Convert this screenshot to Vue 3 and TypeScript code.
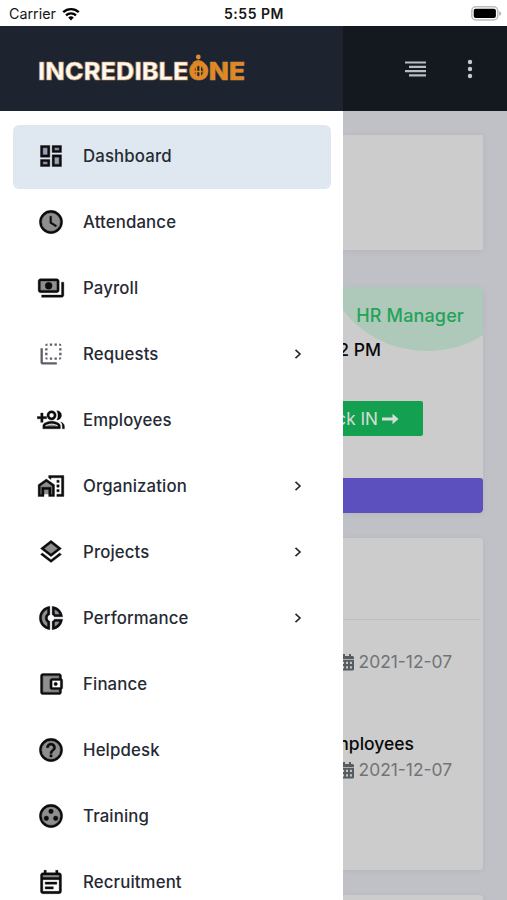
<script setup lang="ts">
interface MenuItem {
  label: string
  icon: string
  expandable?: boolean
  active?: boolean
}

const menu: MenuItem[] = [
  { label: 'Dashboard', icon: 'dashboard', active: true },
  { label: 'Attendance', icon: 'clock' },
  { label: 'Payroll', icon: 'payments' },
  { label: 'Requests', icon: 'flip', expandable: true },
  { label: 'Employees', icon: 'group' },
  { label: 'Organization', icon: 'work', expandable: true },
  { label: 'Projects', icon: 'layers', expandable: true },
  { label: 'Performance', icon: 'donut', expandable: true },
  { label: 'Finance', icon: 'wallet' },
  { label: 'Helpdesk', icon: 'help' },
  { label: 'Training', icon: 'workspaces' },
  { label: 'Recruitment', icon: 'event' },
]

const tones: Record<string, string> = {
  dashboard: 'M5 5h4v6H5zm10 8h4v6h-4zM5 17h4v2H5zM15 5h4v2h-4z',
  clock: 'M12 4a8 8 0 1 0 0 16 8 8 0 0 0 0-16z',
  payments: 'M3 6h14v8H3z',
  flip: '',
  group: 'M7 18c1-1.400 3-2.200 5.500-2.200S17 16.600 18 18z',
  work: 'M3 11.900V19h10v-7.100L8 8.400z',
  layers: 'M6.260 9L12 13.470 17.740 9 12 4.530z',
  donut: 'M13.500 3.500c3.500.6 6.400 3.400 7 7h-5c-.3-.9-1.100-1.600-2-1.900zm0 11.900c.9-.3 1.700-1 2-1.900h5c-.6 3.500-3.500 6.400-7 7zM3.500 12c0-4.200 3-7.700 7-8.400v5.500c-1.200.5-2 1.600-2 2.900s.8 2.400 2 2.900v5.500c-4-.7-7-4.200-7-8.400z',
  wallet: 'M5 5v14h14v-2h-6a2 2 0 0 1-2-2V9c0-1.100.9-2 2-2h6V5z',
  help: 'M12 4a8 8 0 1 0 0 16 8 8 0 0 0 0-16z',
  workspaces: 'M12 4a8 8 0 1 0 0 16 8 8 0 0 0 0-16z',
  event: 'M5 6h14v2H5z',
}

const shapes: Record<string, string> = {
  dashboard: 'M3 13h8V3H3zm2-8h4v6H5zm8 16h8V11h-8zm2-8h4v6h-4zM13 3v6h8V3zm6 4h-4V5h4zM3 21h8v-6H3zm2-4h4v2H5z',
  clock: 'M12 2a10 10 0 1 0 0 20 10 10 0 0 0 0-20zm0 18a8 8 0 1 1 0-16 8 8 0 0 1 0 16zm.500-13H11v6l5.200 3.200.800-1.300-4.500-2.700z',
  payments: 'M19 14V6c0-1.100-.9-2-2-2H3c-1.100 0-2 .9-2 2v8c0 1.100.9 2 2 2h14c1.100 0 2-.9 2-2zm-2 0H3V6h14zm-7-7a3 3 0 1 0 0 6 3 3 0 0 0 0-6zm13 0v11c0 1.100-.9 2-2 2H4v-2h17V7z',
  flip: 'M9 7H7v2h2zm0 4H7v2h2zm0-8a2 2 0 0 0-2 2h2zm4 12h-2v2h2zm6-12v2h2a2 2 0 0 0-2-2zm-6 0h-2v2h2zM9 17v-2H7a2 2 0 0 0 2 2zm10-4h2v-2h-2zm0-4h2V7h-2zm0 8a2 2 0 0 0 2-2h-2zM5 7H3v12c0 1.100.9 2 2 2h12v-2H5zm10-2h2V3h-2zm0 12h2v-2h-2z',
  group: 'M3.200 6v3H.2v2h3v3h2v-3h3V9h-3V6zM12.500 4a4 4 0 1 0 0 8 4 4 0 0 0 0-8zm0 2a2 2 0 1 1 0 4 2 2 0 0 1 0-4zM12.500 13c-2.700 0-7.500 1.300-7.500 4v2.500h15V17c0-2.700-4.800-4-7.500-4zm0 2c2.200 0 4.700.9 5.400 1.800v.7H7.100v-.7c.7-.9 3.200-1.800 5.400-1.800zM17 4a4 4 0 0 1 0 8c1.400-2.400 1.400-5.600 0-8zM20.300 13.600c1.600.8 3.200 2 3.200 3.700v2.200h-1.800V17c0-1.400-.5-2.500-1.400-3.400z',
  work: 'M1 11v10h5v-6h4v6h5V11L8 6zm12 8h-1v-6H4v6H3v-7.100l5-3.500 5 3.500zm4-12h2v2h-2zm0 4h2v2h-2zm0 4h2v2h-2zM10 3v2l2 1.400V5h9v14h-4v2h6V3z',
  layers: 'M12 18.540l-7.380-5.730L3 14.070l9 7 9-7-1.630-1.270zM12 16l9-7-9-7-9 7zm0-11.470L17.740 9 12 13.470 6.260 9z',
  donut: 'M13 2v7.200c.8.300 1.500 1 1.800 1.800H22C21.500 6.200 17.800 2.500 13 2zm2 2.600c2.200.9 3.700 2.400 4.400 4.400h-3.500l-.9-.9zM11 9.200V2C5.900 2.500 2 6.800 2 12s3.900 9.500 9 10v-7.200c-1.200-.4-2-1.500-2-2.800s.8-2.400 2-2.800zM9 7.900C7.800 8.800 7 10.300 7 12s.8 3.200 2 4.100v3.300c-2.900-1.200-5-4-5-7.400s2.100-6.200 5-7.400zM13 14.800V22c4.800-.5 8.500-4.200 9-9h-7.200c-.3.800-1 1.500-1.800 1.800zm2 1.100.900-.9h3.500c-.9 2.200-2.200 3.500-4.400 4.400z',
  wallet: 'M21 7.280V5c0-1.100-.9-2-2-2H5c-1.110 0-2 .9-2 2v14c0 1.100.890 2 2 2h14c1.100 0 2-.9 2-2v-2.280c.590-.350 1-.980 1-1.720V9c0-.740-.410-1.380-1-1.720zM20 9v6h-7V9zM5 19V5h14v2h-6c-1.100 0-2 .9-2 2v6c0 1.100.9 2 2 2h6v2zM16 10.500a1.500 1.500 0 1 0 0 3 1.500 1.500 0 0 0 0-3z',
  help: 'M11 18h2v-2h-2zm1-16a10 10 0 1 0 0 20 10 10 0 0 0 0-20zm0 18a8 8 0 1 1 0-16 8 8 0 0 1 0 16zm0-14a4 4 0 0 0-4 4h2c0-1.100.9-2 2-2s2 .9 2 2c0 2-3 1.750-3 5h2c0-2.250 3-2.500 3-5a4 4 0 0 0-4-4z',
  workspaces: 'M12 2a10 10 0 1 0 0 20 10 10 0 0 0 0-20zm0 18a8 8 0 1 1 0-16 8 8 0 0 1 0 16zM8 12a2 2 0 1 0 0 4 2 2 0 0 0 0-4zm4-6a2 2 0 1 0 0 4 2 2 0 0 0 0-4zm4 6a2 2 0 1 0 0 4 2 2 0 0 0 0-4z',
  event: 'M19 4h-1V2h-2v2H8V2H6v2H5c-1.110 0-1.990.9-1.990 2L3 20c0 1.100.890 2 2 2h14c1.100 0 2-.9 2-2V6c0-1.100-.9-2-2-2zm0 16H5V10h14zm0-12H5V6h14zM7 12h10v2H7zm0 4h7v2H7z',
}

const notices = [
  { title: '', date: '2021-12-07' },
  { title: 'Employees', date: '2021-12-07' },
]
</script>

<template>
  <div class="screen">
    <div class="status">
      <div class="carrier">
        <span>Carrier</span>
        <svg class="wifi" viewBox="0 0 18 14">
          <path d="M1.200 5.200a11.200 11.200 0 0 1 15.600 0M4 8.300a7.200 7.200 0 0 1 10 0" />
          <path class="solid" d="M9 13.500 6.200 10.600a4 4 0 0 1 5.600 0z" />
        </svg>
      </div>
      <div class="time">5:55 PM</div>
      <svg class="battery" viewBox="0 0 31 15">
        <rect x=".8" y=".8" width="26" height="13.200" rx="4" fill="#fff" stroke="#bdbdbd" stroke-width="1.500" />
        <rect x="2.700" y="2.700" width="22.200" height="9.400" rx="2" fill="#000" />
        <path d="M28.300 5.200c2.300.4 2.300 4.200 0 4.600z" fill="#aaa" />
      </svg>
    </div>

    <div class="body">
      <aside class="drawer">
        <div class="brand">
          <svg class="logo" viewBox="0 0 215 40">
            <g class="word">
              <text class="light" x="1" y="31" textLength="150.500" lengthAdjust="spacingAndGlyphs">INCREDIBLE</text>
              <text class="orange" x="151.500" y="31" textLength="56.500" lengthAdjust="spacingAndGlyphs">ONE</text>
            </g>
            <circle cx="161.300" cy="8" r="2.400" fill="#dd8a3a" />
            <path d="M156 14.200q5.300-4.600 10.600 0M159.400 16.500v12M163.200 16.500v12M157 22.500h8.600" fill="none" stroke="#e5871a" stroke-width="1.700" />
          </svg>
        </div>
        <nav class="menu">
          <div v-for="item in menu" :key="item.label" class="item" :class="{ active: item.active }">
            <svg class="icon" :class="item.icon" viewBox="0 0 24 24">
              <path class="tone" :d="tones[item.icon]" />
              <path class="shape" fill-rule="evenodd" :d="shapes[item.icon]" />
            </svg>
            <span class="label">{{ item.label }}</span>
            <svg v-if="item.expandable" class="chevron" viewBox="0 0 10 12">
              <path d="m2.500 1.800 4.500 4.200-4.500 4.200" />
            </svg>
          </div>
        </nav>
      </aside>

      <main class="page">
        <header class="topbar">
          <svg class="lines" viewBox="0 0 21 16">
            <path d="M0 1.500h21M4 5.800h17M0 10.100h21M4 14.400h17" />
          </svg>
          <svg class="dots" viewBox="0 0 6 20">
            <circle cx="3" cy="3" r="2.200" /><circle cx="3" cy="10" r="2.200" /><circle cx="3" cy="17" r="2.200" />
          </svg>
        </header>
        <div class="content">
          <section class="card blank"></section>
          <section class="card punch">
            <div class="arc"></div>
            <div class="role">HR Manager</div>
            <div class="clock-time">2 PM</div>
            <div class="check">
              <span>Check IN</span>
              <svg viewBox="0 0 17 12"><path d="M0 4.600h10.500V.8L16.500 6l-6 5.200V7.400H0z" /></svg>
            </div>
            <div class="strip"></div>
          </section>
          <section class="card news">
            <div class="news-head"></div>
            <div v-for="(n, i) in notices" :key="i" class="notice">
              <div class="title">{{ n.title }}</div>
              <div class="date">
                <svg viewBox="0 0 14 17">
                  <path fill-rule="evenodd" d="M3 0h2v2h4V0h2v2h1.500Q14 2 14 3.500V5H0V3.500Q0 2 1.500 2H3zM0 5.700h14v9.300q0 1.500-1.500 1.500h-11Q0 16.500 0 15zm2.200 2.100v2.200h1.900V7.800zm3.900 0v2.200H8V7.800zm3.900 0v2.200h1.900V7.800zM2.200 12.200v2.200h1.900v-2.200zm3.900 0v2.200H8v-2.200zm3.900 0v2.200h1.900v-2.200z" />
                </svg>
                <span>{{ n.date }}</span>
              </div>
            </div>
          </section>
          <section class="card rest"></section>
        </div>
      </main>
    </div>
  </div>
</template>

<style>
body {
  margin: 0;
  overflow: hidden;
}
</style>

<style scoped>
.screen {
  width: 507px;
  height: 900px;
  overflow: hidden;
  display: flex;
  flex-direction: column;
  background: #fff;
  font-family: Inter, "Liberation Sans", sans-serif;
}
.screen * {
  box-sizing: border-box;
}
svg {
  display: block;
  flex: none;
}
.status {
  height: 26px;
  flex: none;
  display: grid;
  grid-template-columns: 1fr 80px 1fr;
  align-items: center;
  padding: 1px 5px 0 6px;
  color: #161616;
}
.carrier {
  display: flex;
  align-items: center;
  gap: 6px;
  padding-left: 3px;
  font-size: 14.300px;
}
.wifi {
  width: 18px;
  height: 14px;
  fill: none;
  stroke: #000;
  stroke-width: 2.300;
}
.wifi .solid {
  fill: #000;
  stroke: none;
}
.time {
  font-size: 14px;
  font-weight: 600;
  letter-spacing: .5px;
  text-align: center;
  white-space: nowrap;
}
.battery {
  width: 31px;
  height: 15px;
  justify-self: end;
}
.body {
  flex: 1;
  min-height: 0;
  display: flex;
}
.drawer {
  width: 343px;
  flex: none;
  overflow: hidden;
  background: #fff;
}
.brand {
  height: 85px;
  padding: 23px 0 0 37px;
  background: #1d2430;
}
.logo {
  width: 215px;
  height: 40px;
  overflow: visible;
}
.word text {
  font-size: 24px;
  font-weight: 800;
  stroke-width: .6;
}
.word .light {
  fill: #fff8ef;
  stroke: #c39062;
}
.word .orange {
  fill: #e5871a;
  stroke: #b98a5d;
}
.menu {
  display: flex;
  flex-direction: column;
  gap: 2px;
  padding: 14px 12px 0 13px;
}
.item {
  height: 64px;
  flex: none;
  display: flex;
  align-items: center;
  padding: 0 28px 2px 24px;
  border-radius: 6px;
  color: #252a34;
}
.item.active {
  background: #dfe7f0;
}
.icon {
  width: 28px;
  height: 28px;
  fill: #0c0c0f;
}
.icon .shape {
  stroke: #0c0c0f;
  stroke-width: .3;
}
.icon .tone {
  fill: #8f8f8f;
}
.icon.dashboard .tone {
  fill: #9c9fb5;
}
.icon.flip .shape {
  fill: #5d606c;
  stroke: none;
}
.label {
  flex: 1;
  margin-left: 18px;
  font-size: 16.800px;
  font-weight: 500;
  letter-spacing: .13px;
  line-height: 24px;
}
.chevron {
  width: 10px;
  height: 12px;
  fill: none;
  stroke: #22262e;
  stroke-width: 1.600;
}
.page {
  flex: 1;
  min-width: 0;
  overflow: hidden;
  background: #c0c1c6;
}
.topbar {
  height: 85px;
  display: flex;
  align-items: center;
  justify-content: flex-end;
  gap: 41px;
  padding-right: 34px;
  background: #14181f;
}
.lines {
  width: 21px;
  height: 16px;
  stroke: #b9bcc0;
  stroke-width: 2.200;
}
.dots {
  width: 6px;
  height: 20px;
  fill: #c8c9cb;
}
.content {
  display: flex;
  flex-direction: column;
  padding: 24px 24px 0 0;
}
.card {
  flex: none;
  background: #ccc;
  border-radius: 0 4px 4px 0;
  box-shadow: 0 1px 5px rgba(120, 122, 140, .16);
}
.blank {
  height: 115px;
  border-radius: 0;
}
.punch {
  position: relative;
  height: 226px;
  margin-top: 37px;
  overflow: hidden;
  display: flex;
  flex-direction: column;
  align-items: flex-end;
}
.arc {
  position: absolute;
  right: -48px;
  top: -136px;
  width: 208px;
  height: 200px;
  border-radius: 50%;
  background: #aec8b9;
}
.role {
  position: relative;
  margin: 17px 19px 0 0;
  color: #1fa45a;
  font-size: 18px;
  font-weight: 500;
  letter-spacing: .15px;
  line-height: 24px;
  white-space: nowrap;
}
.clock-time {
  position: relative;
  margin: 10px 102px 0 0;
  color: #080808;
  font-size: 17.500px;
  font-weight: 500;
  line-height: 24px;
  white-space: nowrap;
}
.check {
  display: flex;
  align-items: center;
  justify-content: flex-end;
  gap: 4px;
  width: 150px;
  height: 35px;
  margin: 39px 60px 0 0;
  padding-right: 24px;
  border-radius: 2px;
  background: #13a151;
  color: #d5ddd8;
  font-size: 17.200px;
  white-space: nowrap;
}
.check svg {
  width: 17px;
  height: 12px;
  fill: #d5ddd8;
}
.strip {
  width: 100%;
  height: 35px;
  margin-top: auto;
  border-radius: 0 3px 3px 0;
  background: #5b50bd;
}
.news {
  height: 332px;
  margin-top: 25px;
}
.news-head {
  height: 82px;
  margin-right: 2px;
  border-bottom: 1px solid #c0c0c2;
}
.notice {
  height: 108px;
  display: flex;
  flex-direction: column;
  align-items: flex-end;
  padding-top: 3px;
}
.title {
  height: 26px;
  margin-right: 69px;
  color: #080808;
  font-size: 17.500px;
  font-weight: 500;
  line-height: 26px;
}
.date {
  display: flex;
  align-items: center;
  gap: 5px;
  margin-right: 31px;
  color: #707477;
  font-size: 17.400px;
  line-height: 26px;
  white-space: nowrap;
}
.date svg {
  width: 14px;
  height: 17px;
  fill: #565c60;
}
.rest {
  height: 60px;
  margin-top: 25px;
}
</style>
